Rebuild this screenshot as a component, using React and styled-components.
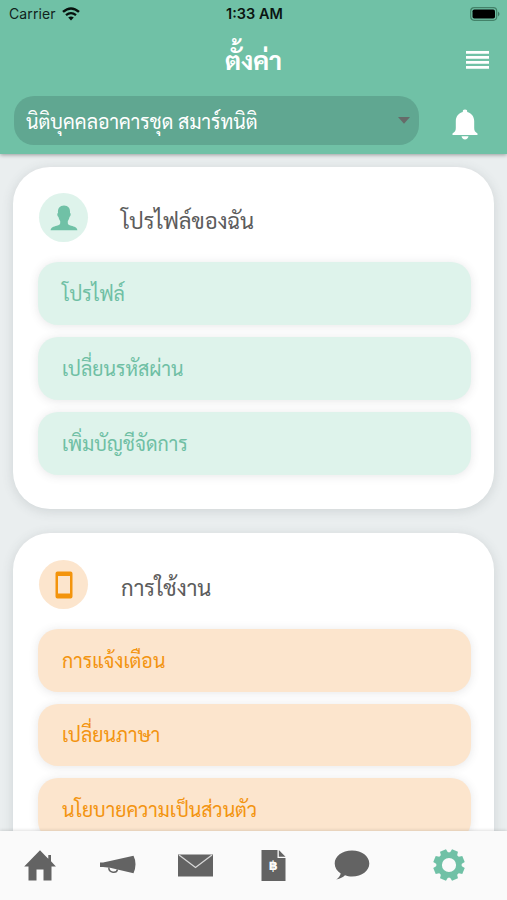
import React from "react";
import styled, { createGlobalStyle } from "styled-components";

const GlobalStyle = createGlobalStyle`
  * {
    box-sizing: border-box;
  }
  body {
    margin: 0;
    font-family: Sarabun, "Noto Sans Thai Looped", "Noto Sans", sans-serif;
  }
`;

// Full height phone screen
const Screen = styled.div`
  display: flex;
  flex-direction: column;
  height: 100vh;
  overflow: hidden;
  background-color: #eaeeef;
`;

const Header = styled.header`
  display: flex;
  flex-direction: column;
  flex: none;
  height: 154px;
  background-color: #70c1a6;
  box-shadow: 0 1px 4px rgba(0, 0, 0, 0.35);
  z-index: 1;
`;

const StatusBar = styled.div`
  display: grid;
  grid-template-columns: 1fr auto 1fr;
  align-items: center;
  height: 27px;
  padding: 0 7px 0 9px;
  font-family: Inter, "Liberation Sans", sans-serif;
  font-size: 14px;
  color: #10231c;
`;

const Carrier = styled.div`
  display: flex;
  align-items: center;
  gap: 6px;
  letter-spacing: 0.1px;
`;

const Clock = styled.div`
  font-size: 14.5px;
  font-weight: 600;
  color: #0b1512;
`;

const BatteryIcon = styled.svg`
  justify-self: end;
`;

const TitleRow = styled.div`
  display: grid;
  grid-template-columns: 1fr auto 1fr;
  align-items: center;
  height: 69px;
  padding: 0 18px 4px;
`;

const Title = styled.h1`
  grid-column: 2;
  margin: 0;
  font-size: 25.5px;
  line-height: 40px;
  font-weight: 700;
  color: white;
`;

const IconButton = styled.button`
  display: flex;
  justify-self: end;
  padding: 0;
  border: none;
  background: none;
  cursor: pointer;
`;

const SelectRow = styled.div`
  display: flex;
  align-items: center;
  justify-content: space-between;
  padding: 0 29px 0 14px;
`;

const Select = styled.button`
  display: flex;
  align-items: center;
  justify-content: space-between;
  width: 405px;
  height: 49px;
  padding: 0 9px 0 12px;
  border: none;
  border-radius: 20px;
  background-color: #60a791;
  font-family: inherit;
  font-size: 19.6px;
  color: white;
`;

const BellButton = styled(IconButton)`
  padding-top: 7px;
`;

const Content = styled.main`
  display: flex;
  flex-direction: column;
  flex: 1;
  gap: 24px;
  min-height: 0;
  padding: 13px 13px 0;
  overflow: hidden;
`;

const Card = styled.section`
  flex: none;
  padding: 26px 23px 34px 25px;
  border-radius: 37px;
  background-color: white;
  box-shadow: 0 2px 12px rgba(60, 75, 80, 0.16);
  & + & {
    padding-top: 27px;
  }
`;

const CardHead = styled.div`
  display: flex;
  align-items: center;
  gap: 33px;
  height: 49px;
  margin: 0 0 20px 1px;
`;

const Badge = styled.div`
  display: flex;
  align-items: center;
  justify-content: center;
  width: 49px;
  height: 49px;
  border-radius: 50%;
  background-color: ${(props) => props.$tint};
`;

const CardTitle = styled.h2`
  margin: 0;
  padding-top: 4px;
  font-size: 22px;
  line-height: 40px;
  font-weight: 400;
  color: #5c5c5c;
`;

const ItemList = styled.div`
  display: flex;
  flex-direction: column;
  gap: 12px;
`;

const Item = styled.button`
  display: flex;
  align-items: center;
  height: ${(props) => props.$height}px;
  padding: 0 24px 1px;
  border: none;
  border-radius: 20px;
  background-color: ${(props) => props.$tint};
  box-shadow: 0 1px 10px rgba(60, 60, 70, 0.13);
  font-family: inherit;
  font-size: 19.6px;
  color: ${(props) => props.$color};
`;

const TabBar = styled.nav`
  display: flex;
  flex: none;
  height: 69px;
  background-color: #fafafa;
  box-shadow: 0 -1px 3px rgba(0, 0, 0, 0.12);
  z-index: 1;
`;

const Tab = styled.button`
  display: flex;
  justify-content: center;
  align-items: center;
  width: 78px;
  padding: 0 0 1px 1px;
  border: none;
  background: none;
  color: ${(props) => (props.$active ? "#70c1a6" : "#636363")};
  &:last-child {
    flex: 1;
  }
`;

const WifiIcon = () => (
  <svg width="18" height="14" viewBox="0 0 18 14" fill="none" stroke="#07110d">
    <path d="M1 4.9 Q9 -2 17 4.9" strokeWidth="2.5" />
    <path d="M4 8.2 Q9 4 14 8.2" strokeWidth="2.3" />
    <path d="M9 13.5 L6.2 10.6 Q9 8.4 11.8 10.6 Z" fill="#07110d" stroke="none" />
  </svg>
);

const PersonIcon = () => (
  <svg width="28" height="26" viewBox="0 0 28 26" fill="#70c1a6">
    <path d="M14 .5C9.800.5 7.600 3.300 8 8c-1.100.2-.8 3.300.5 3.900.4 1.900.9 3 1.700 4v2.300c0 1.300-1.200 1.900-3.400 2.500C3.500 21.600.9 22.300.6 25.200h26.800c-.3-2.900-2.900-3.600-6.200-4.500-2.200-.6-3.400-1.200-3.400-2.500v-2.300c.8-1 1.300-2.100 1.700-4 1.300-.6 1.600-3.700.5-3.900C20.400 3.300 18.200.5 14 .5Z" />
  </svg>
);

const PhoneIcon = () => (
  <svg width="18" height="28" viewBox="0 0 18 28">
    <path
      fill="#f3940c"
      fillRule="evenodd"
      d="M2.500.5h13a2 2 0 0 1 2 2v23a2 2 0 0 1-2 2h-13a2 2 0 0 1-2-2v-23a2 2 0 0 1 2-2ZM3 5v17.500h12V5Z"
    />
  </svg>
);

const HomeIcon = () => (
  <svg width="32" height="31" viewBox="0 0 32 31" fill="currentColor">
    <path d="M16 .3 22 6.400l2.300 2.300V5h2.700v6.300l4.900 5.200H27.500V30.500H19.500V19.500h-7v11H4.500v-14H.2Z" />
  </svg>
);

const MegaphoneIcon = () => (
  <svg width="36" height="20" viewBox="0 0 36 20">
    <path
      fill="currentColor"
      d="M0 7.500h3L10 6 33.500.8q4 8 0 17.500L10 12.700 3 12H0Z"
    />
    <path d="M8.800 12.500c0 5.800 8 6 8.700 1.800" fill="none" stroke="currentColor" strokeWidth="1.500" />
  </svg>
);

const MailIcon = () => (
  <svg width="35" height="23" viewBox="0 0 35 23">
    <path fill="currentColor" d="M0 .5h35v22H0Z" />
    <path d="m1 1 16.500 12.500L34 1" fill="none" stroke="#d8d8d8" strokeWidth="1.300" />
  </svg>
);

const BillMark = styled.text`
  font: 700 13px "DejaVu Sans", sans-serif;
  text-anchor: middle;
  fill: #fafafa;
`;

const BillIcon = () => (
  <svg width="25" height="31" viewBox="0 0 25 31">
    <path fill="currentColor" d="M.5 0H16.500v8h8V31H.5Z" />
    <path fill="currentColor" d="m17.800 0 6.700 6.700h-6.700Z" />
    <BillMark x="12.300" y="20">฿</BillMark>
  </svg>
);

const ChatIcon = () => (
  <svg width="36" height="30" viewBox="0 0 36 30" fill="currentColor">
    <path d="M18 .5C8 .5.700 6.300.700 13.500c0 4.300 2.400 7.700 6 10-.6 2.400-2 4.300-4.400 6 4-1 6.500-2 8.700-4.200 2 .9 4.500 1.200 7 1.200 10 0 17.300-5.800 17.300-13S28 .5 18 .5Z" />
  </svg>
);

const teeth = [0, 45, 90, 135, 180, 225, 270, 315];

const GearIcon = () => (
  <svg width="32" height="32" viewBox="-16 -16 32 32">
    <circle r="9.900" fill="none" stroke="currentColor" strokeWidth="5.600" />
    {teeth.map((angle) => (
      <path
        key={angle}
        d="M-4-11-3.200-15.700H3.200L4-11Z"
        fill="currentColor"
        transform={`rotate(${angle + 22.5})`}
      />
    ))}
  </svg>
);

const sections = [
  {
    title: "โปรไฟล์ของฉัน",
    icon: <PersonIcon />,
    tint: "#def3eb",
    color: "#6fbfa4",
    height: 63,
    items: ["โปรไฟล์", "เปลี่ยนรหัสผ่าน", "เพิ่มบัญชีจัดการ"],
  },
  {
    title: "การใช้งาน",
    icon: <PhoneIcon />,
    tint: "#fce5cd",
    color: "#f39410",
    height: 62.5,
    items: ["การแจ้งเตือน", "เปลี่ยนภาษา", "นโยบายความเป็นส่วนตัว"],
  },
];

const App = () => {
  return (
    <>
      <GlobalStyle />
      <Screen>
        <Header>
          <StatusBar>
            <Carrier>
              Carrier
              <WifiIcon />
            </Carrier>
            <Clock>1:33 AM</Clock>
            <BatteryIcon width="30" height="14" viewBox="0 0 30 14">
              <rect x=".7" y=".7" width="26" height="12.600" rx="3.500" fill="none" stroke="#438269" strokeWidth="1.200" />
              <rect x="2.500" y="2.500" width="22.500" height="9" rx="1.800" fill="#000" />
              <path d="M28 4.500q3 2.500 0 5Z" fill="#3e7863" />
            </BatteryIcon>
          </StatusBar>
          <TitleRow>
            <Title>ตั้งค่า</Title>
            <IconButton>
              <svg width="23" height="18" viewBox="0 0 23 18" fill="white">
                <path d="M0 0h23v2.800H0ZM0 5h23v2.800H0ZM0 10h23v2.800H0ZM0 15h23v2.800H0Z" />
              </svg>
            </IconButton>
          </TitleRow>
          <SelectRow>
            <Select>
              นิติบุคคลอาคารชุด สมาร์ทนิติ
              <svg width="12" height="7" viewBox="0 0 12 7">
                <path d="M0 0h12L6 6.800Z" fill="#666b69" />
              </svg>
            </Select>
            <BellButton>
              <svg width="26" height="31" viewBox="0 0 26 31" fill="white">
                <path d="M13 .5a2.200 2.200 0 0 0-2.200 2.400C6.500 4 3.800 7.500 3.800 12v7c0 2.500-.8 4-3.300 5.500V26h25v-1.500c-2.500-1.500-3.300-3-3.300-5.500v-7c0-4.500-2.700-8-7-9.100A2.200 2.200 0 0 0 13 .5ZM9.500 27.300h7c-.3 2-1.700 3.200-3.500 3.200s-3.200-1.200-3.500-3.200Z" />
              </svg>
            </BellButton>
          </SelectRow>
        </Header>
        <Content>
          {sections.map((section) => (
            <Card key={section.title}>
              <CardHead>
                <Badge $tint={section.tint}>{section.icon}</Badge>
                <CardTitle>{section.title}</CardTitle>
              </CardHead>
              <ItemList>
                {section.items.map((item) => (
                  <Item
                    key={item}
                    $tint={section.tint}
                    $color={section.color}
                    $height={section.height}
                  >
                    {item}
                  </Item>
                ))}
              </ItemList>
            </Card>
          ))}
        </Content>
        <TabBar>
          <Tab>
            <HomeIcon />
          </Tab>
          <Tab>
            <MegaphoneIcon />
          </Tab>
          <Tab>
            <MailIcon />
          </Tab>
          <Tab>
            <BillIcon />
          </Tab>
          <Tab>
            <ChatIcon />
          </Tab>
          <Tab $active>
            <GearIcon />
          </Tab>
        </TabBar>
      </Screen>
    </>
  );
};

export default App;
